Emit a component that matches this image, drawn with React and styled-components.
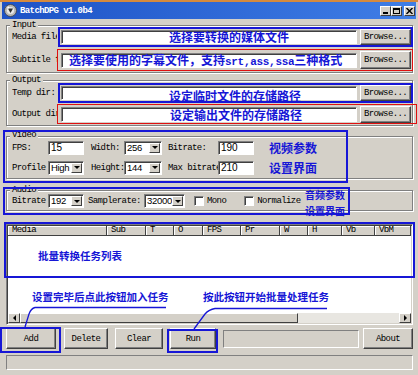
import React from "react";
import styled, { createGlobalStyle } from "styled-components";

const MONO = `"Liberation Mono", "DejaVu Sans Mono", monospace`;
const SANS = `"Liberation Sans", Arial, sans-serif`;
const CJK = `"Noto Sans CJK SC", "Noto Sans", sans-serif`;
const FACE = "#d4d0c8";
const ANNO = "#1616d6";

const GlobalStyle = createGlobalStyle`
  html, body { margin: 0; padding: 0; background: ${FACE}; }
  body { font-family: ${MONO}; font-size: 9px; letter-spacing: -0.6px; color: #000; }
  * { box-sizing: border-box; }
`;

const Desktop = styled.div`
  position: relative;
  width: 418px;
  height: 375px;
  overflow: hidden;
  background: #d58a3e;
  padding-top: 2px;
`;

const Window = styled.div`
  width: 418px;
  height: 373px;
  background: ${FACE};
  padding: 0 2px;
  display: flex;
  flex-direction: column;
`;

const TitleBar = styled.div`
  height: 17px;
  flex: none;
  display: flex;
  align-items: center;
  padding: 0 1px 0 2px;
  background: linear-gradient(to right, #1d52c6, #3f7ee6);
`;

const TitleText = styled.span`
  margin-left: 3px;
  color: #fff;
  font-weight: 700;
  font-size: 9px;
  letter-spacing: -0.6px;
`;

const Spacer = styled.div`
  flex: 1;
`;

const CaptionGroup = styled.div`
  display: flex;
  align-items: center;
  gap: ${(p) => p.$gap}px;
`;

const CaptionButton = styled.div`
  width: 11px;
  height: 10px;
  background: ${FACE};
  border: 1px solid;
  border-color: #fff #404040 #404040 #fff;
  display: flex;
  align-items: center;
  justify-content: center;
`;

const Body = styled.div`
  flex: 1;
  display: flex;
  flex-direction: column;
  padding: 0 3px 0 4px;
  margin-top: 1px;
`;

const GroupBox = styled.div`
  position: relative;
  flex: none;
  margin-top: ${(p) => p.$mt}px;
  border: 1px solid #808080;
  box-shadow: inset 1px 1px 0 #fff, 1px 1px 0 #fff;
  padding: ${(p) => p.$pad};
  display: flex;
  flex-direction: column;
  gap: ${(p) => p.$gap || 0}px;
`;

const Legend = styled.span`
  position: absolute;
  left: 3px;
  top: ${(p) => p.$top}px;
  padding: 0 2px;
  background: ${FACE};
  line-height: 9px;
`;

const FieldRow = styled.div`
  display: flex;
  align-items: center;
  height: ${(p) => p.$h}px;
`;

const FieldLabel = styled.div`
  flex: none;
  width: 45px;
  overflow: hidden;
  white-space: nowrap;
`;

const Marked = styled.div`
  flex: none;
  display: flex;
  align-items: center;
  gap: 3px;
  height: 100%;
  width: ${(p) => p.$w}px;
  margin-left: ${(p) => p.$ml}px;
  padding-left: ${(p) => p.$pl}px;
  border: ${(p) => p.$bw}px solid ${(p) => p.$color};
`;

const TextField = styled.div`
  flex: none;
  width: ${(p) => p.$w}px;
  height: ${(p) => p.$h || 14}px;
  background: #fff;
  border: 1px solid;
  border-color: #808080 #fff #fff #808080;
  box-shadow: inset 1px 1px 0 #404040;
  padding: ${(p) => p.$pt || 0}px 0 0 2px;
  font-family: ${SANS};
  font-size: 10px;
  letter-spacing: 0;
  line-height: 12px;
  white-space: nowrap;
`;

const AnnoText = styled.span`
  display: block;
  padding-left: ${(p) => p.$pl}px;
  font-family: ${CJK};
  font-weight: 700;
  font-size: 12px;
  line-height: 12px;
  letter-spacing: 0;
  color: ${ANNO};
  white-space: nowrap;
`;

const AsciiBit = styled.span`
  font-family: ${MONO};
  font-size: 11px;
  letter-spacing: -0.3px;
`;

const Button = styled.button`
  flex: none;
  width: ${(p) => p.$w}px;
  height: ${(p) => p.$h}px;
  padding: 0;
  background: ${FACE};
  color: #000;
  font-family: ${MONO};
  font-size: 9px;
  letter-spacing: -0.6px;
  border: 1px solid;
  border-color: #fff #404040 #404040 #fff;
  box-shadow: inset -1px -1px 0 #808080;
`;

const ParamRow = styled.div`
  display: grid;
  grid-template-columns: 36px 36px 40px 38px 56px 36px 1fr;
  align-items: center;
  height: 15px;
`;

const CellLabel = styled.div`
  padding-left: ${(p) => p.$pl || 0}px;
  overflow: hidden;
  white-space: nowrap;
`;

const SideNote = styled.span`
  padding-left: ${(p) => p.$pl || 0}px;
  font-family: ${CJK};
  font-weight: 700;
  font-size: ${(p) => p.$size}px;
  line-height: ${(p) => p.$lh || 14}px;
  letter-spacing: 0;
  color: ${ANNO};
  white-space: nowrap;
`;

const Combo = styled.div`
  flex: none;
  width: ${(p) => p.$w}px;
  height: 14px;
  display: flex;
  background: #fff;
  border: 1px solid;
  border-color: #808080 #fff #fff #808080;
  box-shadow: inset 1px 1px 0 #404040;
  margin-left: ${(p) => p.$ml || 0}px;
`;

const ComboValue = styled.span`
  flex: 1;
  padding-left: 2px;
  font-family: ${SANS};
  font-size: 9.5px;
  line-height: 12px;
  letter-spacing: -0.3px;
  white-space: nowrap;
`;

const ComboButton = styled.span`
  flex: none;
  width: 11px;
  margin: 1px 1px 1px 0;
  background: ${FACE};
  border: 1px solid;
  border-color: #fff #404040 #404040 #fff;
  display: flex;
  align-items: center;
  justify-content: center;
`;

const Triangle = styled.span`
  width: 0;
  height: 0;
  border-style: solid;
  border-color: transparent;
  border-width: ${(p) =>
    p.$dir === "down" ? "3px 3px 0 3px" : p.$dir === "left" ? "3px 3px 3px 0" : "3px 0 3px 3px"};
  ${(p) =>
    p.$dir === "down"
      ? "border-top-color: #000;"
      : p.$dir === "left"
      ? "border-right-color: #000;"
      : "border-left-color: #000;"}
`;

const AudioRow = styled.div`
  display: flex;
  align-items: center;
  height: 14px;
`;

const InlineLabel = styled.span`
  flex: none;
  width: ${(p) => (p.$w ? `${p.$w}px` : "auto")};
  margin-left: ${(p) => p.$ml || 0}px;
  white-space: nowrap;
`;

const CheckBox = styled.span`
  flex: none;
  width: 10px;
  height: 10px;
  margin-left: ${(p) => p.$ml}px;
  background: #fff;
  border: 1px solid;
  border-color: #808080 #fff #fff #808080;
  box-shadow: inset 1px 1px 0 #404040;
`;

const Highlight = styled.div`
  position: absolute;
  left: ${(p) => p.$l}px;
  top: ${(p) => p.$t}px;
  width: ${(p) => p.$w}px;
  height: ${(p) => p.$h}px;
  border: 2px solid ${ANNO};
  pointer-events: none;
  z-index: 2;
`;

const AudioNote = styled.div`
  position: absolute;
  left: 298px;
  top: -4px;
  display: flex;
  flex-direction: column;
  z-index: 1;
`;

const ListView = styled.div`
  position: relative;
  flex: none;
  margin-top: 13px;
  height: 101px;
  border: 1px solid;
  border-color: #808080 #fff #fff #808080;
  box-shadow: inset 1px 1px 0 #404040, inset -1px -1px 0 ${FACE};
  padding: 1px;
  background: #fff;
  display: flex;
  flex-direction: column;
`;

const Header = styled.div`
  flex: none;
  height: 10px;
  display: flex;
  background: ${FACE};
`;

const HeaderCell = styled.div`
  flex: none;
  width: ${(p) => p.$w}px;
  padding-left: 4px;
  line-height: 9px;
  border-right: 1px solid #404040;
  border-bottom: 1px solid #404040;
  box-shadow: inset 1px 1px 0 #fff;
  white-space: nowrap;
  overflow: hidden;
`;

const ListBody = styled.div`
  flex: 1;
  background: #fff;
`;

const ListTitle = styled.div`
  margin-top: 13px;
  padding-left: 30px;
  font-family: ${CJK};
  font-weight: 700;
  font-size: 10.5px;
  line-height: 14px;
  letter-spacing: 0;
  color: ${ANNO};
`;

const HintRow = styled.div`
  margin-top: 27px;
  padding-left: 24px;
  display: grid;
  grid-template-columns: 171px auto;
  font-family: ${CJK};
  font-weight: 700;
  font-size: 10.5px;
  line-height: 14px;
  letter-spacing: 0;
  color: ${ANNO};
  white-space: nowrap;
`;

const ScrollBar = styled.div`
  flex: none;
  height: 10px;
  display: flex;
  background: #e8e6e1;
`;

const ScrollArrow = styled.div`
  flex: none;
  width: 12px;
  background: ${FACE};
  border: 1px solid;
  border-color: #fff #404040 #404040 #fff;
  display: flex;
  align-items: center;
  justify-content: center;
`;

const ScrollThumb = styled.div`
  flex: none;
  width: 278px;
  background: ${FACE};
  border: 1px solid;
  border-color: #fff #404040 #404040 #fff;
`;

const ButtonBar = styled.div`
  flex: none;
  margin-top: 3px;
  height: 21px;
  display: flex;
  align-items: center;
`;

const ButtonSlot = styled.div`
  position: relative;
  flex: none;
  display: flex;
  margin-left: ${(p) => p.$ml || 0}px;
`;

const Progress = styled.div`
  flex: none;
  width: 136px;
  height: 18px;
  margin-left: ${(p) => p.$ml}px;
  border: 1px solid;
  border-color: #808080 #fff #fff #808080;
`;

const StatusBar = styled.div`
  flex: none;
  margin-top: 6px;
  height: 15px;
  border: 1px solid;
  border-color: #808080 #fff #fff #808080;
`;

const CalloutLines = styled.svg`
  position: absolute;
  left: 0;
  top: 0;
  pointer-events: none;
  z-index: 3;
`;

const AppIcon = () => (
  <svg width="13" height="13" viewBox="0 0 13 13">
    <circle cx="6.5" cy="6.5" r="6" fill="#b8b8b8" stroke="#404040" strokeWidth="0.8" />
    <circle cx="6.5" cy="6.5" r="3.6" fill="#e8e8e8" />
    <path d="M4 4.5 L9 4.5 L6.5 9 Z" fill="#303030" />
    <circle cx="4.3" cy="3.6" r="1" fill="#fff" />
  </svg>
);

const headers = [
  ["Media", 99],
  ["Sub", 39],
  ["T", 28],
  ["O", 29],
  ["FPS", 38],
  ["Pr", 39],
  ["W", 28],
  ["H", 34],
  ["Vb", 33],
  ["VbM", 36],
];

export default function App() {
  return (
    <>
      <GlobalStyle />
      <Desktop>
        <Window>
          <TitleBar>
            <AppIcon />
            <TitleText>BatchDPG v1.0b4</TitleText>
            <Spacer />
            <CaptionGroup $gap={2}>
              <CaptionGroup $gap={0}>
                <CaptionButton>
                  <svg width="7" height="6" viewBox="0 0 7 6">
                    <rect x="1" y="4" width="5" height="2" fill="#000" />
                  </svg>
                </CaptionButton>
                <CaptionButton>
                  <svg width="7" height="6" viewBox="0 0 7 6">
                    <rect x="0.5" y="0.5" width="6" height="5" fill="none" stroke="#000" />
                    <rect x="0" y="0" width="7" height="2" fill="#000" />
                  </svg>
                </CaptionButton>
              </CaptionGroup>
              <CaptionButton>
                <svg width="7" height="6" viewBox="0 0 7 6">
                  <path d="M0.5 0 L6.5 6 M6.5 0 L0.5 6" stroke="#000" strokeWidth="1.4" />
                </svg>
              </CaptionButton>
            </CaptionGroup>
          </TitleBar>

          <Body>
            <GroupBox $mt={5} $pad="1px 0 1px 5px" $gap={2}>
              <Legend $top={-5}>Input</Legend>
              <FieldRow $h={20}>
                <FieldLabel>Media file</FieldLabel>
                <Marked $w={355} $ml={1} $pl={1} $bw={2} $color={ANNO}>
                  <TextField $w={296}>
                    <AnnoText $pl={105}>选择要转换的媒体文件</AnnoText>
                  </TextField>
                  <Button $w={51} $h={16}>Browse...</Button>
                </Marked>
              </FieldRow>
              <FieldRow $h={22}>
                <FieldLabel>Subtitle file</FieldLabel>
                <Marked $w={356} $ml={0} $pl={3} $bw={1} $color="#e01010">
                  <TextField $w={296} $h={15}>
                    <AnnoText $pl={5}>
                      选择要使用的字幕文件，支持<AsciiBit>srt,ass,ssa</AsciiBit>三种格式
                    </AnnoText>
                  </TextField>
                  <Button $w={51} $h={18}>Browse...</Button>
                </Marked>
              </FieldRow>
            </GroupBox>

            <GroupBox $mt={7} $pad="2px 0 1px 5px" $gap={1}>
              <Legend $top={-5}>Output</Legend>
              <FieldRow $h={20}>
                <FieldLabel>Temp dir:</FieldLabel>
                <Marked $w={355} $ml={1} $pl={1} $bw={2} $color={ANNO}>
                  <TextField $w={296} $pt={3}>
                    <AnnoText $pl={105}>设定临时文件的存储路径</AnnoText>
                  </TextField>
                  <Button $w={51} $h={16}>Browse...</Button>
                </Marked>
              </FieldRow>
              <FieldRow $h={20}>
                <FieldLabel>Output dir:</FieldLabel>
                <Marked $w={360} $ml={0} $pl={3} $bw={1} $color="#e01010">
                  <TextField $w={296} $h={15} $pt={1}>
                    <AnnoText $pl={106}>设定输出文件的存储路径</AnnoText>
                  </TextField>
                  <Button $w={51} $h={17}>Browse...</Button>
                </Marked>
              </FieldRow>
            </GroupBox>

            <GroupBox $mt={10} $pad="3px 0 3px 5px" $gap={5}>
              <Legend $top={-6}>Video</Legend>
              <Highlight $l={-4} $t={-7} $w={345} $h={53} />
              <ParamRow>
                <CellLabel>FPS:</CellLabel>
                <TextField $w={36}>15</TextField>
                <CellLabel $pl={7}>Width:</CellLabel>
                <Combo $w={38}>
                  <ComboValue>256</ComboValue>
                  <ComboButton>
                    <Triangle $dir="down" />
                  </ComboButton>
                </Combo>
                <CellLabel $pl={6}>Bitrate:</CellLabel>
                <TextField $w={36}>190</TextField>
                <SideNote $pl={15} $size={12}>视频参数</SideNote>
              </ParamRow>
              <ParamRow>
                <CellLabel>Profile</CellLabel>
                <Combo $w={36}>
                  <ComboValue>High</ComboValue>
                  <ComboButton>
                    <Triangle $dir="down" />
                  </ComboButton>
                </Combo>
                <CellLabel $pl={7}>Height:</CellLabel>
                <Combo $w={38}>
                  <ComboValue>144</ComboValue>
                  <ComboButton>
                    <Triangle $dir="down" />
                  </ComboButton>
                </Combo>
                <CellLabel $pl={6}>Max bitrate</CellLabel>
                <TextField $w={36}>210</TextField>
                <SideNote $pl={15} $size={12}>设置界面</SideNote>
              </ParamRow>
            </GroupBox>

            <GroupBox $mt={11} $pad="3px 0 2px 5px">
              <Legend $top={-5}>Audio</Legend>
              <Highlight $l={-4} $t={-4} $w={347} $h={28} />
              <AudioNote>
                <SideNote $size={10} $lh={16}>音频参数</SideNote>
                <SideNote $size={10} $lh={16}>设置界面</SideNote>
              </AudioNote>
              <AudioRow>
                <InlineLabel $w={36}>Bitrate</InlineLabel>
                <Combo $w={36}>
                  <ComboValue>192</ComboValue>
                  <ComboButton>
                    <Triangle $dir="down" />
                  </ComboButton>
                </Combo>
                <InlineLabel $w={56} $ml={4}>Samplerate:</InlineLabel>
                <Combo $w={41}>
                  <ComboValue>32000</ComboValue>
                  <ComboButton>
                    <Triangle $dir="down" />
                  </ComboButton>
                </Combo>
                <CheckBox $ml={9} />
                <InlineLabel $ml={3}>Mono</InlineLabel>
                <CheckBox $ml={18} />
                <InlineLabel $ml={3}>Normalize</InlineLabel>
              </AudioRow>
            </GroupBox>

            <ListView>
              <Highlight $l={-3} $t={-3} $w={411} $h={56} />
              <Header>
                {headers.map(([name, w]) => (
                  <HeaderCell key={name} $w={w}>
                    {name}
                  </HeaderCell>
                ))}
              </Header>
              <ListBody>
                <ListTitle>批量转换任务列表</ListTitle>
                <HintRow>
                  <span>设置完毕后点此按钮加入任务</span>
                  <span>按此按钮开始批量处理任务</span>
                </HintRow>
              </ListBody>
              <ScrollBar>
                <ScrollArrow>
                  <Triangle $dir="left" />
                </ScrollArrow>
                <ScrollThumb />
                <Spacer />
                <ScrollArrow>
                  <Triangle $dir="right" />
                </ScrollArrow>
              </ScrollBar>
            </ListView>

            <ButtonBar>
              <ButtonSlot>
                <Highlight $l={-6} $t={-1} $w={61} $h={26} />
                <Button $w={50} $h={21}>Add</Button>
              </ButtonSlot>
              <ButtonSlot $ml={8}>
                <Button $w={44} $h={21}>Delete</Button>
              </ButtonSlot>
              <ButtonSlot $ml={7}>
                <Button $w={48} $h={21}>Clear</Button>
              </ButtonSlot>
              <ButtonSlot $ml={7}>
                <Highlight $l={-3} $t={1} $w={51} $h={24} />
                <Button $w={46} $h={21}>Run</Button>
              </ButtonSlot>
              <Progress $ml={7} />
              <ButtonSlot $ml={4}>
                <Button $w={50} $h={21}>About</Button>
              </ButtonSlot>
            </ButtonBar>

            <StatusBar />
          </Body>
        </Window>

        <CalloutLines width="418" height="375" viewBox="0 0 418 375">
          <path
            d="M166 307.5 L35 307.5 Q31 308.5 29 314 L25 327"
            fill="none"
            stroke={ANNO}
            strokeWidth="1.3"
          />
          <path
            d="M327 308.5 L215 308.5 Q209 309.5 205 314 L194 329"
            fill="none"
            stroke={ANNO}
            strokeWidth="1.3"
          />
        </CalloutLines>
      </Desktop>
    </>
  );
}
